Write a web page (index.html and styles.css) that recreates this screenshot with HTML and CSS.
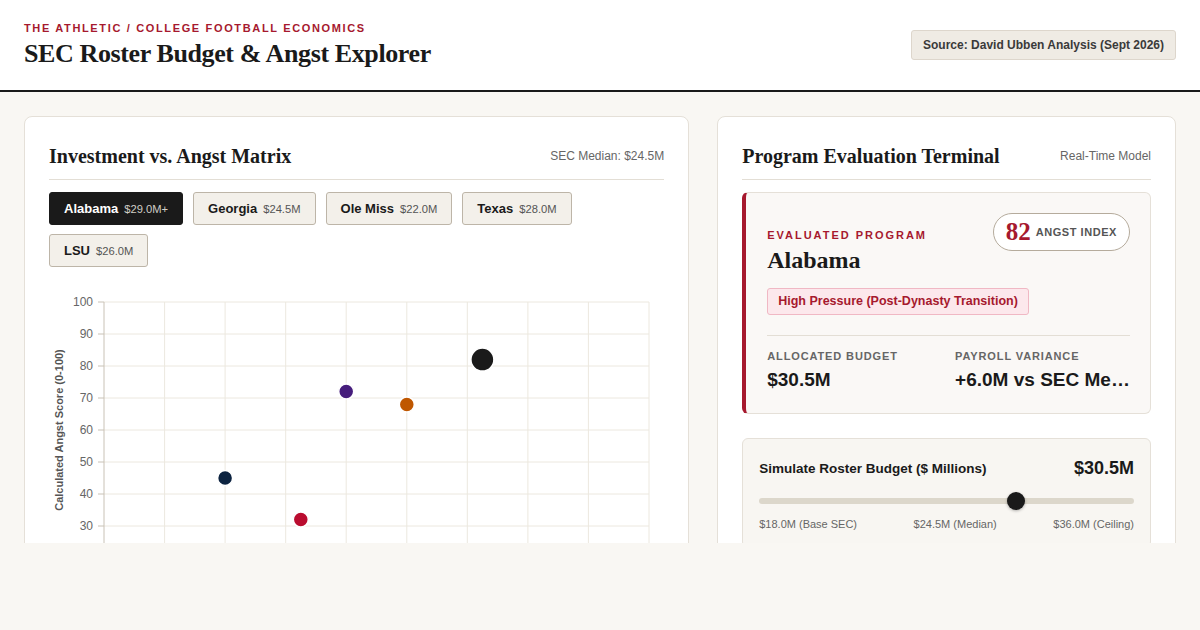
FILE: index.html
```html
<!DOCTYPE html>
<html lang="en">
<head>
<meta charset="utf-8">
<title>SEC Roster Budget &amp; Angst Explorer</title>
<link rel="stylesheet" href="styles.css">
</head>
<body>
<div class="page">
  <header class="masthead">
    <div class="brand">
      <div class="kicker">The Athletic / College Football Economics</div>
      <h1 class="title">SEC Roster Budget &amp; Angst Explorer</h1>
    </div>
    <div class="source">Source: David Ubben Analysis (Sept 2026)</div>
  </header>

  <main class="main">
    <section class="card">
      <div class="card-head">
        <h2 class="card-title">Investment vs. Angst Matrix</h2>
        <span class="card-meta">SEC Median: $24.5M</span>
      </div>
      <div class="teams">
        <button class="team active"><span class="team-name">Alabama</span><span class="team-price">$29.0M+</span></button>
        <button class="team"><span class="team-name">Georgia</span><span class="team-price">$24.5M</span></button>
        <button class="team"><span class="team-name">Ole Miss</span><span class="team-price">$22.0M</span></button>
        <button class="team"><span class="team-name">Texas</span><span class="team-price">$28.0M</span></button>
        <button class="team"><span class="team-name">LSU</span><span class="team-price">$26.0M</span></button>
      </div>
      <svg class="chart" width="615" height="380" viewBox="0 0 615 380">
        <g class="grid">
          <line x1="55" y1="20" x2="600" y2="20"/>
          <line x1="55" y1="52" x2="600" y2="52"/>
          <line x1="55" y1="84" x2="600" y2="84"/>
          <line x1="55" y1="116" x2="600" y2="116"/>
          <line x1="55" y1="148" x2="600" y2="148"/>
          <line x1="55" y1="180" x2="600" y2="180"/>
          <line x1="55" y1="212" x2="600" y2="212"/>
          <line x1="55" y1="244" x2="600" y2="244"/>
          <line x1="55" y1="276" x2="600" y2="276"/>
          <line x1="115.6" y1="20" x2="115.6" y2="276"/>
          <line x1="176.1" y1="20" x2="176.1" y2="276"/>
          <line x1="236.7" y1="20" x2="236.7" y2="276"/>
          <line x1="297.2" y1="20" x2="297.2" y2="276"/>
          <line x1="357.8" y1="20" x2="357.8" y2="276"/>
          <line x1="418.3" y1="20" x2="418.3" y2="276"/>
          <line x1="478.9" y1="20" x2="478.9" y2="276"/>
          <line x1="539.4" y1="20" x2="539.4" y2="276"/>
          <line x1="600" y1="20" x2="600" y2="276"/>
        </g>
        <g class="axis">
          <line x1="55" y1="20" x2="55" y2="276"/>
          <line x1="49" y1="20" x2="55" y2="20"/>
          <line x1="49" y1="52" x2="55" y2="52"/>
          <line x1="49" y1="84" x2="55" y2="84"/>
          <line x1="49" y1="116" x2="55" y2="116"/>
          <line x1="49" y1="148" x2="55" y2="148"/>
          <line x1="49" y1="180" x2="55" y2="180"/>
          <line x1="49" y1="212" x2="55" y2="212"/>
          <line x1="49" y1="244" x2="55" y2="244"/>
        </g>
        <g class="ticks">
          <text x="44" y="24">100</text>
          <text x="44" y="56">90</text>
          <text x="44" y="88">80</text>
          <text x="44" y="120">70</text>
          <text x="44" y="152">60</text>
          <text x="44" y="184">50</text>
          <text x="44" y="216">40</text>
          <text x="44" y="248">30</text>
          <text x="44" y="280">20</text>
        </g>
        <text class="ylabel" transform="translate(14 148) rotate(-90)">Calculated Angst Score (0-100)</text>
        <g class="dots">
          <circle cx="176.1" cy="196" r="7.5" fill="#0c2340"/>
          <circle cx="251.8" cy="237.6" r="7.5" fill="#ba0c2f"/>
          <circle cx="297.2" cy="109.6" r="7.5" fill="#461d7c"/>
          <circle cx="357.8" cy="122.4" r="7.5" fill="#bf5700"/>
          <circle cx="433.4" cy="77.6" r="11.5" fill="#1a1a1a"/>
        </g>
      </svg>
    </section>

    <section class="card">
      <div class="card-head">
        <h2 class="card-title">Program Evaluation Terminal</h2>
        <span class="card-meta">Real-Time Model</span>
      </div>
      <div class="eval">
        <div class="eval-top">
          <div class="eval-label">Evaluated Program</div>
          <div class="angst"><span class="angst-num">82</span><span class="angst-label">Angst Index</span></div>
          <div class="eval-name">Alabama</div>
          <div class="eval-tag-row"><span class="eval-tag">High Pressure (Post-Dynasty Transition)</span></div>
        </div>
        <div class="stats">
          <div class="stat">
            <div class="stat-label">Allocated Budget</div>
            <div class="stat-value">$30.5M</div>
          </div>
          <div class="stat">
            <div class="stat-label">Payroll Variance</div>
            <div class="stat-value">+6.0M vs SEC Median</div>
          </div>
        </div>
      </div>
      <div class="sim">
        <div class="sim-head">
          <span class="sim-label">Simulate Roster Budget ($ Millions)</span>
          <span class="sim-value">$30.5M</span>
        </div>
        <input class="slider" type="range" min="18" max="36" step="0.5" value="30.5">
        <div class="sim-scale">
          <span>$18.0M (Base SEC)</span>
          <span>$24.5M (Median)</span>
          <span>$36.0M (Ceiling)</span>
        </div>
      </div>
    </section>
  </main>
</div>
</body>
</html>
```

FILE: styles.css
```css
* { box-sizing: border-box; }
html, body { margin: 0; padding: 0; }
body {
  background: #f9f7f3;
  font-family: "Liberation Sans", Arial, sans-serif;
  color: #1a1a1a;
}
.page {
  height: 543px;
  overflow: hidden;
  background: #f9f7f3;
}
.masthead {
  background: #ffffff;
  border-bottom: 2px solid #1a1a1a;
  height: 92px;
  padding: 20px 24px 0;
  display: flex;
  justify-content: space-between;
  align-items: flex-start;
}
.kicker {
  font-size: 11px;
  font-weight: 700;
  letter-spacing: 0.15em;
  text-transform: uppercase;
  color: #a6192e;
  line-height: 16px;
}
.title {
  margin: 1px 0 0;
  font-family: "Liberation Serif", "Times New Roman", serif;
  font-size: 26px;
  font-weight: 700;
  letter-spacing: -0.015em;
  line-height: 34px;
}
.source {
  margin-top: 10px;
  background: #efebe4;
  border: 1px solid #ddd6cc;
  border-radius: 3px;
  padding: 7px 11px;
  font-size: 12px;
  font-weight: 700;
  color: #3a3a3a;
  line-height: 14px;
}
.main {
  padding: 24px;
  display: grid;
  grid-template-columns: 1.45fr 1fr;
  gap: 28px;
  align-items: start;
}
.card {
  background: #ffffff;
  border: 1px solid #e5e0d8;
  border-radius: 8px;
  padding: 24px 24px 24px;
}
.card-head {
  display: flex;
  justify-content: space-between;
  align-items: center;
  padding-bottom: 8px;
  border-bottom: 1px solid #e3ded5;
  margin-bottom: 12px;
}
.card-title {
  margin: 0;
  font-family: "Liberation Serif", "Times New Roman", serif;
  font-size: 20px;
  font-weight: 700;
  line-height: 30px;
}
.card-meta {
  font-size: 12px;
  color: #666;
}
.teams {
  display: flex;
  flex-wrap: wrap;
  gap: 9px 10px;
}
.team {
  height: 33px;
  padding: 0 14px;
  border: 1px solid #bdb5a8;
  border-radius: 3px;
  background: #f3f0ea;
  display: flex;
  align-items: center;
  gap: 6px;
  font-family: inherit;
  color: #1a1a1a;
  cursor: pointer;
}
.team-name {
  font-size: 13px;
  font-weight: 700;
}
.team-price {
  font-size: 11.2px;
  color: #555;
}
.team.active {
  background: #1a1a1a;
  border-color: #1a1a1a;
  color: #ffffff;
}
.team.active .team-price { color: #d0cdc6; }
.chart {
  display: block;
  margin-top: 15px;
}
.grid line { stroke: #ece8df; stroke-width: 1; }
.axis line { stroke: #c9c2b6; stroke-width: 1; }
.ticks text {
  font-size: 12px;
  fill: #666;
  text-anchor: end;
}
.ylabel {
  font-size: 11px;
  font-weight: 700;
  fill: #555;
  text-anchor: middle;
}
.dots circle { stroke: #ffffff; stroke-width: 1.5; }

.eval {
  background: #faf8f6;
  border: 1px solid #e5e0d8;
  border-left: 4px solid #a6192e;
  border-radius: 6px;
  padding: 20px 20px 22px 21px;
}
.eval-top {
  display: grid;
  grid-template-columns: 1fr auto;
}
.eval-label {
  grid-column: 1;
  grid-row: 1;
  margin-top: 15px;
  font-size: 11px;
  font-weight: 700;
  letter-spacing: 0.18em;
  text-transform: uppercase;
  color: #a6192e;
  line-height: 14px;
}
.angst {
  grid-column: 2;
  grid-row: 1 / span 2;
  align-self: start;
  height: 38px;
  padding: 0 12px;
  border: 1px solid #b5ab9c;
  border-radius: 20px;
  background: #ffffff;
  display: flex;
  align-items: center;
  gap: 5px;
  white-space: nowrap;
}
.angst-num {
  font-family: "Liberation Serif", "Times New Roman", serif;
  font-size: 25px;
  font-weight: 700;
  color: #a6192e;
}
.angst-label {
  font-size: 11px;
  font-weight: 700;
  color: #555;
  letter-spacing: 0.05em;
  text-transform: uppercase;
}
.eval-name {
  grid-column: 1;
  grid-row: 2;
  margin-top: 4px;
  font-family: "Liberation Serif", "Times New Roman", serif;
  font-size: 24px;
  font-weight: 700;
  line-height: 29px;
}
.eval-tag-row {
  grid-column: 1 / -1;
  grid-row: 3;
  margin-top: 13px;
  display: flex;
}
.eval-tag {
  background: #fce8ec;
  border: 1px solid #f0b8c4;
  border-radius: 3px;
  padding: 5px 10px;
  font-size: 12.5px;
  font-weight: 700;
  color: #a6192e;
  line-height: 15px;
}
.stats {
  margin-top: 20px;
  border-top: 1px solid #e3ded5;
  padding-top: 14px;
  display: grid;
  grid-template-columns: 1fr 1fr;
  gap: 13px;
}
.stat { min-width: 0; }
.stat-label {
  font-size: 11px;
  font-weight: 700;
  letter-spacing: 0.08em;
  text-transform: uppercase;
  color: #666;
  line-height: 13px;
}
.stat-value {
  margin-top: 6px;
  font-size: 19px;
  font-weight: 700;
  line-height: 22px;
  white-space: nowrap;
  overflow: hidden;
  text-overflow: ellipsis;
}
.sim {
  margin-top: 24px;
  background: #f8f6f2;
  border: 1px solid #e5e0d8;
  border-radius: 6px;
  padding: 16px 16px 16px;
}
.sim-head {
  display: flex;
  justify-content: space-between;
  align-items: center;
  height: 26px;
}
.sim-label { font-size: 13.5px; font-weight: 700; }
.sim-value { font-size: 18px; font-weight: 700; }
.slider {
  -webkit-appearance: none;
  appearance: none;
  display: block;
  width: 100%;
  height: 18px;
  margin: 11px 0 0;
  background: transparent;
}
.slider::-webkit-slider-runnable-track {
  height: 6px;
  background: #dcd7cb;
  border-radius: 3px;
}
.slider::-webkit-slider-thumb {
  -webkit-appearance: none;
  width: 18px;
  height: 18px;
  margin-top: -6px;
  border-radius: 50%;
  background: #1a1a1a;
  box-shadow: 0 1px 3px rgba(0,0,0,0.3);
}
.sim-scale {
  margin-top: 7px;
  display: flex;
  justify-content: space-between;
  font-size: 11px;
  color: #666;
  line-height: 14px;
}
```
